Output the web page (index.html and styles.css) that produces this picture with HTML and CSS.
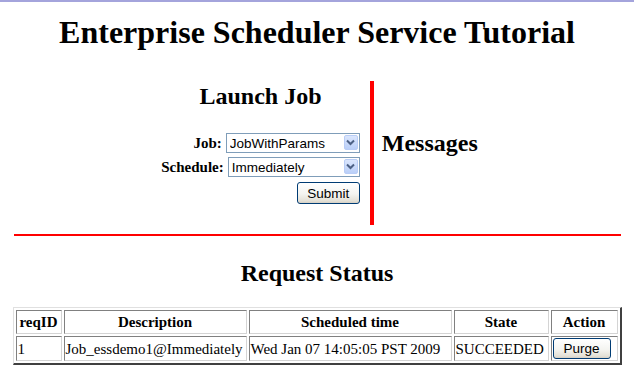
FILE: index.html
```html
<!DOCTYPE html>
<html>
<head>
<meta charset="utf-8">
<title>Enterprise Scheduler Service Tutorial</title>
<link rel="stylesheet" href="styles.css">
</head>
<body>
<div class="topbar"></div>
<h1 class="title">Enterprise Scheduler Service Tutorial</h1>
<div class="panels">
  <div class="launch">
    <h2 class="heading">Launch Job</h2>
    <div class="row">
      <label class="label">Job:</label>
      <div class="select-wrap select-job">
        <select class="select"><option>JobWithParams</option></select>
        <span class="arrow"><svg width="9" height="7" viewBox="0 0 9 7"><path d="M1 1.5 L4.5 5 L8 1.5" fill="none" stroke="#4d6185" stroke-width="2"/></svg></span>
      </div>
    </div>
    <div class="row">
      <label class="label">Schedule:</label>
      <div class="select-wrap select-schedule">
        <select class="select"><option>Immediately</option></select>
        <span class="arrow"><svg width="9" height="7" viewBox="0 0 9 7"><path d="M1 1.5 L4.5 5 L8 1.5" fill="none" stroke="#4d6185" stroke-width="2"/></svg></span>
      </div>
    </div>
    <div class="row row-submit">
      <button class="btn btn-submit">Submit</button>
    </div>
  </div>
  <div class="messages">
    <h2 class="heading">Messages</h2>
  </div>
</div>
<hr class="rule">
<h2 class="heading status-heading">Request Status</h2>
<table class="grid">
  <tr>
    <th class="c-id">reqID</th>
    <th class="c-desc">Description</th>
    <th class="c-time">Scheduled time</th>
    <th class="c-state">State</th>
    <th class="c-action">Action</th>
  </tr>
  <tr>
    <td>1</td>
    <td>Job_essdemo1@Immediately</td>
    <td>Wed Jan 07 14:05:05 PST 2009</td>
    <td>SUCCEEDED</td>
    <td class="action-cell"><button class="btn btn-purge">Purge</button></td>
  </tr>
</table>
</body>
</html>
```
FILE: styles.css
```css
html, body {
  margin: 0;
  padding: 0;
  background: #fff;
}
body {
  font-family: "Liberation Serif", "Times New Roman", serif;
  color: #000;
}
.topbar {
  height: 2px;
  background: #a4a4dc;
}
.title {
  font-size: 32px;
  line-height: 36px;
  font-weight: bold;
  text-align: center;
  margin: 12px 0 31px;
}
.heading {
  font-size: 24px;
  line-height: 28px;
  font-weight: bold;
  margin: 0;
}
.panels {
  display: flex;
  justify-content: center;
}
.launch {
  display: flex;
  flex-direction: column;
  padding: 1px 10px 21px 5px;
  border-right: 4px solid #ff0000;
}
.launch .heading {
  text-align: center;
  margin-bottom: 23px;
}
.row {
  display: flex;
  justify-content: flex-end;
  align-items: center;
  gap: 4px;
  margin-bottom: 4px;
}
.row-submit {
  margin-top: 1px;
  margin-bottom: 0;
}
.label {
  font-size: 15px;
  font-weight: bold;
}
.select-wrap {
  position: relative;
  height: 20px;
}
.select-job { width: 134px; }
.select-schedule { width: 132px; }
.select {
  -webkit-appearance: none;
  appearance: none;
  width: 100%;
  height: 100%;
  box-sizing: border-box;
  border: 1px solid #7f9db9;
  border-radius: 0;
  background: #fff;
  font-family: "Liberation Sans", Arial, sans-serif;
  font-size: 13.5px;
  color: #000;
  padding: 0 0 0 3px;
  margin: 0;
  outline: none;
}
.arrow {
  position: absolute;
  right: 2px;
  top: 2px;
  width: 14px;
  height: 15px;
  box-sizing: border-box;
  border: 1px solid #b9cdf6;
  border-radius: 2px;
  background: linear-gradient(#dbe6fd, #bacff8);
  display: flex;
  align-items: center;
  justify-content: center;
}
.btn {
  box-sizing: border-box;
  border: 1px solid #003c74;
  border-radius: 3px;
  background: linear-gradient(#ffffff, #f4f4f0 55%, #e3e0d6 90%, #d6d0c4);
  font-family: "Liberation Sans", Arial, sans-serif;
  font-size: 13.5px;
  color: #000;
  padding: 0;
  margin: 0;
}
.btn-submit {
  width: 63px;
  height: 22px;
}
.messages {
  padding: 48px 0 0 8px;
}
.rule {
  width: 607px;
  height: 2px;
  border: 0;
  background: #ff0000;
  margin: 9px auto 0;
}
.status-heading {
  text-align: center;
  margin: 23px 0 20px;
}
.grid {
  margin: 0 auto;
  border-collapse: separate;
  border-spacing: 2px;
  border: 1px solid;
  border-color: #e0e0e0 #404040 #404040 #e0e0e0;
  border-bottom-width: 2px;
  border-right-width: 2px;
  font-size: 15px;
}
.grid th,
.grid td {
  border: 1px solid;
  border-color: #808080 #d4d4d4 #d4d4d4 #808080;
  padding: 1px;
  line-height: 20px;
  white-space: nowrap;
}
.grid th {
  font-weight: bold;
  text-align: center;
}
.grid td {
  text-align: left;
}
.c-id { width: 42px; }
.c-desc { width: 179px; }
.c-time { width: 199px; }
.c-state { width: 91px; }
.c-action { width: 63px; }
.action-cell {
  padding: 2px 4px 2px 2px;
}
.btn-purge {
  display: block;
  width: 58px;
  height: 21px;
}
```
